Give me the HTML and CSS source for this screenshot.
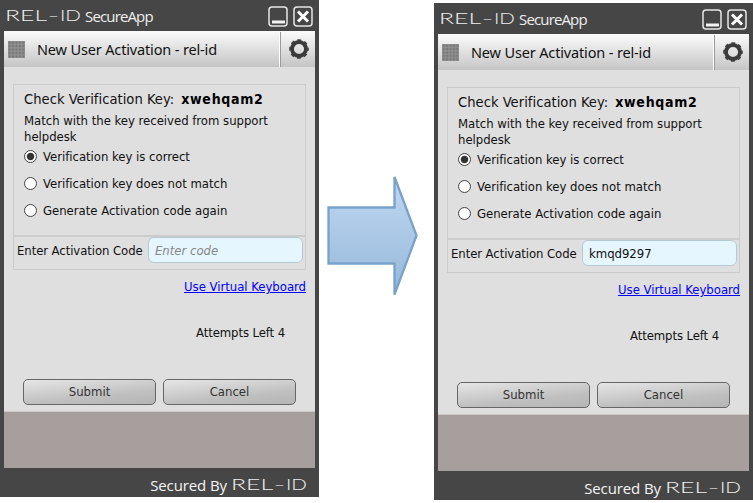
FILE: index.html
```
<!DOCTYPE html>
<html lang="en">
<head>
<meta charset="utf-8">
<title>REL-ID SecureApp</title>
<link rel="stylesheet" href="styles.css">
</head>
<body>
<svg class="defs" width="0" height="0" aria-hidden="true">
  <defs>
    <symbol id="gear" viewBox="0 0 20 20">
      <circle cx="10" cy="10" r="7" fill="none" stroke="#3b3b3b" stroke-width="3.8"/>
      <circle cx="10" cy="10" r="9" fill="none" stroke="#3b3b3b" stroke-width="1.6" stroke-dasharray="3.8 3.27" stroke-dashoffset="1.9"/>
    </symbol>
    <symbol id="min" viewBox="0 0 20 21">
      <rect x="1" y="1" width="18" height="19" rx="3" fill="none" stroke="#e6e6e6" stroke-width="1.5"/>
      <path d="M4 16H17" stroke="#f2f2f2" stroke-width="3"/>
    </symbol>
    <symbol id="close" viewBox="0 0 20 21">
      <rect x="1" y="1" width="18" height="19" rx="3" fill="none" stroke="#e6e6e6" stroke-width="1.5"/>
      <path d="M5 5.5L15 15.5M15 5.5L5 15.5" stroke="#fff" stroke-width="3"/>
    </symbol>
    <pattern id="dots" width="3.4" height="3.4" patternUnits="userSpaceOnUse">
      <rect width="3.4" height="3.4" fill="#929292"/>
      <rect x=".6" y=".6" width="2.2" height="2.2" fill="#777"/>
    </pattern>
  </defs>
</svg>
<main class="stage">
  <section class="window">
    <header class="titlebar">
      <svg class="brand" width="78" height="24"><text x="0" y="17" textLength="42" lengthAdjust="spacingAndGlyphs">REL</text><text x="43" y="17" textLength="11" lengthAdjust="spacingAndGlyphs">–</text><text x="55" y="17" textLength="21" lengthAdjust="spacingAndGlyphs">ID</text></svg>
      <span class="app">SecureApp</span>
      <svg class="ctl" width="20" height="21"><use href="#min"/></svg>
      <svg class="ctl" width="20" height="21"><use href="#close"/></svg>
    </header>
    <div class="heading">
      <svg class="grid" width="17" height="17"><rect width="17" height="17" fill="url(#dots)"/></svg>
      <h1>New User Activation - rel-id</h1>
      <div class="settings"><svg width="20" height="20"><use href="#gear"/></svg></div>
    </div>
    <div class="content">
      <div class="panel">
        <p class="key"><span class="keylabel">Check Verification Key:</span> <b>xwehqam2</b></p>
        <p class="hint">Match with the key received from support<br>helpdesk</p>
        <label class="option"><i class="radio on"></i><span>Verification key is correct</span></label>
        <label class="option"><i class="radio"></i><span>Verification key does not match</span></label>
        <label class="option"><i class="radio"></i><span>Generate Activation code again</span></label>
      </div>
      <div class="code"><span class="codelabel">Enter Activation Code</span><div class="field empty">Enter code</div></div>
      <div class="link"><a href="#">Use Virtual Keyboard</a></div>
      <p class="attempts">Attempts Left 4</p>
      <div class="buttons"><button>Submit</button><button>Cancel</button></div>
    </div>
    <div class="spacer"></div>
    <footer class="footer">
      <span class="secured">Secured By</span>
      <svg class="brand" width="78" height="24"><text x="0" y="17" textLength="42" lengthAdjust="spacingAndGlyphs">REL</text><text x="43" y="17" textLength="11" lengthAdjust="spacingAndGlyphs">–</text><text x="55" y="17" textLength="21" lengthAdjust="spacingAndGlyphs">ID</text></svg>
    </footer>
  </section>

  <svg class="arrow" width="94" height="130" viewBox="0 0 94 130">
    <defs><linearGradient id="sky" x1="0" y1="0" x2="0" y2="1"><stop offset="0" stop-color="#c0d8f2"/><stop offset="1" stop-color="#96b8da"/></linearGradient></defs>
    <path d="M1.5 36.5H67.5V6L89.5 64.5L67.5 123.5V92.5H1.5Z" fill="url(#sky)" stroke="#79a2cb" stroke-width="2.3"/>
  </svg>

  <section class="window second">
    <header class="titlebar">
      <svg class="brand" width="78" height="24"><text x="0" y="17" textLength="42" lengthAdjust="spacingAndGlyphs">REL</text><text x="43" y="17" textLength="11" lengthAdjust="spacingAndGlyphs">–</text><text x="55" y="17" textLength="21" lengthAdjust="spacingAndGlyphs">ID</text></svg>
      <span class="app">SecureApp</span>
      <svg class="ctl" width="20" height="21"><use href="#min"/></svg>
      <svg class="ctl" width="20" height="21"><use href="#close"/></svg>
    </header>
    <div class="heading">
      <svg class="grid" width="17" height="17"><rect width="17" height="17" fill="url(#dots)"/></svg>
      <h1>New User Activation - rel-id</h1>
      <div class="settings"><svg width="20" height="20"><use href="#gear"/></svg></div>
    </div>
    <div class="content">
      <div class="panel">
        <p class="key"><span class="keylabel">Check Verification Key:</span> <b>xwehqam2</b></p>
        <p class="hint">Match with the key received from support<br>helpdesk</p>
        <label class="option"><i class="radio on"></i><span>Verification key is correct</span></label>
        <label class="option"><i class="radio"></i><span>Verification key does not match</span></label>
        <label class="option"><i class="radio"></i><span>Generate Activation code again</span></label>
      </div>
      <div class="code"><span class="codelabel">Enter Activation Code</span><div class="field">kmqd9297</div></div>
      <div class="link"><a href="#">Use Virtual Keyboard</a></div>
      <p class="attempts">Attempts Left 4</p>
      <div class="buttons"><button>Submit</button><button>Cancel</button></div>
    </div>
    <div class="spacer"></div>
    <footer class="footer">
      <span class="secured">Secured By</span>
      <svg class="brand" width="78" height="24"><text x="0" y="17" textLength="42" lengthAdjust="spacingAndGlyphs">REL</text><text x="43" y="17" textLength="11" lengthAdjust="spacingAndGlyphs">–</text><text x="55" y="17" textLength="21" lengthAdjust="spacingAndGlyphs">ID</text></svg>
    </footer>
  </section>
</main>
</body>
</html>
```
FILE: styles.css
```
* { box-sizing: border-box; }
body {
  margin: 0;
  background: #fff;
  overflow: hidden;
  font: 13px/16px "DejaVu Sans Condensed", "DejaVu Sans", sans-serif;
  font-stretch: condensed;
  letter-spacing: -.02px;
  color: #111;
}
.defs { position: absolute; }
p, h1 { margin: 0; }
.stage { display: flex; align-items: flex-start; width: 753px; height: 503px; }
.window {
  width: 319px;
  height: 497px;
  flex: none;
  display: flex;
  flex-direction: column;
  background: #464646;
  padding: 0 4px;
}
.second { margin-top: 3px; }
.arrow { flex: none; margin: 171px 13px 0 8px; }

.titlebar { height: 31px; flex: none; display: flex; align-items: center; padding: 1px 2px 0 1px; }
.brand { flex: none; overflow: visible; }
.brand text { font: 300 16px Lato, sans-serif; letter-spacing: 0; fill: #f0f0f0; }
.app {
  flex: 1;
  margin-left: 2px;
  font: 15px/20px "Open Sans", sans-serif;
  font-stretch: normal;
  letter-spacing: -.85px;
  color: #eee;
}
.ctl { flex: none; margin-left: 5px; }

.heading {
  height: 36px;
  flex: none;
  display: flex;
  align-items: center;
  padding-left: 4px;
  background: linear-gradient(#fbfbfb, #c5c5c5);
}
h1 {
  flex: 1;
  margin-left: 12px;
  font: 14.5px/20px "Noto Sans", sans-serif;
  letter-spacing: -.15px;
  white-space: nowrap;
}
.settings {
  width: 35px;
  height: 35px;
  padding-left: 2px;
  border-left: 1px solid #999;
  box-shadow: -1px 0 #fff;
  display: flex;
  align-items: center;
  justify-content: center;
}

.content { height: 345px; flex: none; background: #dfdfdf; padding: 17px 9px 0; border-bottom: 1px solid #cbc8c8; }
.panel { width: 293px; height: 152px; border: 1px solid #ccc; padding: 4px 0 0 10px; white-space: nowrap; }
.key { font-size: 14.6px; line-height: 20px; display: flex; gap: 7px; letter-spacing: .03px; }
.key b { font-size: 14px; letter-spacing: .72px; color: #000; }
.hint { margin-top: 4px; }
.option { display: flex; align-items: center; height: 27px; }
.hint + .option { height: 23px; margin-bottom: 2px; }
.radio {
  width: 13px;
  height: 13px;
  margin-right: 6px;
  border: 1px solid #444;
  border-radius: 50%;
  background: #fff;
}
.radio.on { background: radial-gradient(circle, #333 3.3px, #fff 4.2px); }
.code {
  width: 293px;
  height: 34px;
  border: 1px solid #ccc;
  display: flex;
  align-items: center;
  justify-content: space-between;
  padding: 0 2px 0 3px;
  white-space: nowrap;
}
.codelabel { margin-bottom: 4px; letter-spacing: -.08px; }
.field {
  width: 155px;
  height: 26px;
  margin-bottom: 6px;
  padding: 0 6px;
  border: 1px solid #b5c9d5;
  border-radius: 6px;
  background: #e5f6ff;
  line-height: 25px;
}
.empty { color: #888; font-style: italic; }
.link { text-align: right; margin-top: 9px; }
.link a { color: #00f; }
.attempts { text-align: right; margin: 30px 21px 0 0; letter-spacing: -.1px; }
.buttons { display: flex; gap: 7px; margin: 38px 0 0 10px; }
button {
  width: 133px;
  height: 26px;
  padding: 0;
  border: 1px solid #666;
  border-radius: 5px;
  background: linear-gradient(174deg, #e6e6e6, #bfbfbf 65%, #b5b5b5);
  font: inherit;
  color: #333;
}
.spacer { height: 56px; flex: none; background: #a79e9e; }
.footer { flex: 1; display: flex; align-items: center; justify-content: flex-end; gap: 4px; padding: 4px 6px 0 0; }
.secured { font: 15px/20px "Open Sans", sans-serif; letter-spacing: -.1px; color: #f4f4f4; }
```
